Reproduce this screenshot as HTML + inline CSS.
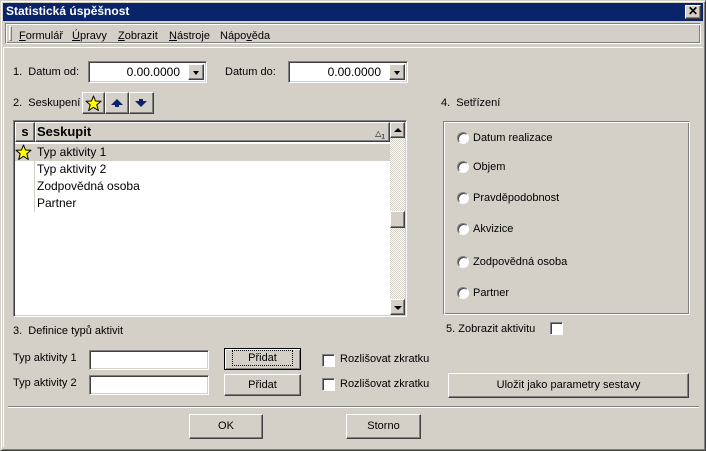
<!DOCTYPE html>
<html><head><meta charset="utf-8"><style>
*{box-sizing:border-box;margin:0;padding:0}
body{width:706px;height:451px;overflow:hidden;background:#d4d0c8;font-family:"Liberation Sans",Arial,sans-serif;font-size:11px;color:#000;position:relative}
.a{position:absolute}
.t{position:absolute;white-space:nowrap;line-height:13px}
.sunk{position:absolute;background:#fff;border:1px solid;border-color:#808080 #fff #fff #808080;box-shadow:inset 1px 1px 0 #404040,inset -1px -1px 0 #d4d0c8}
.btn{position:absolute;background:#d4d0c8;border:1px solid;border-color:#fff #404040 #404040 #fff;box-shadow:inset -1px -1px 0 #808080;text-align:center}
.dd{position:absolute;right:2px;top:2px;width:16px;bottom:2px;background:#d4d0c8;border:1px solid;border-color:#fff #404040 #404040 #fff;box-shadow:inset -1px -1px 0 #808080}
.dd:after{content:"";position:absolute;left:4px;top:6px;border:3px solid transparent;border-top:4px solid #000;border-bottom:0}
.cb{position:absolute;width:13px;height:13px;background:#fff;border:1px solid;border-color:#808080 #fff #fff #808080;box-shadow:inset 1px 1px 0 #404040}
.rb{position:absolute;width:12px;height:12px;border-radius:50%;background:#fff;border:1px solid;border-color:#808080 #fff #fff #808080;box-shadow:inset 1px 1px 0 #404040}
.u{text-decoration:underline}
</style></head><body>
<div class="a" style="left:0;top:0;width:706px;height:451px;border:1px solid;border-color:#d4d0c8 #404040 #404040 #d4d0c8;box-shadow:inset 1px 1px 0 #fff,inset -1px -1px 0 #808080"></div>
<div class="a" style="left:3px;top:3px;width:700px;height:18px;background:#0a246a"></div>
<div class="t" style="left:6px;top:5px;color:#fff;font-weight:bold;font-size:12px">Statistická úspěšnost</div>
<div class="btn" style="left:685px;top:5px;width:16px;height:14px;font-weight:bold;font-size:12px;line-height:11px">✕</div>
<div class="a" style="left:5px;top:23px;width:696px;height:21px;border:1px solid;border-color:#808080 #fff #fff #808080;box-shadow:inset 1px 1px 0 #fff,inset -1px -1px 0 #808080"></div>
<div class="a" style="left:9px;top:26px;width:3px;height:15px;border:1px solid;border-color:#fff #808080 #808080 #fff"></div>
<div class="t" style="left:19px;top:30px"><span class="u">F</span>ormulář</div>
<div class="t" style="left:72px;top:30px"><span class="u">Ú</span>pravy</div>
<div class="t" style="left:118px;top:30px"><span class="u">Z</span>obrazit</div>
<div class="t" style="left:169px;top:30px"><span class="u">N</span>ástroje</div>
<div class="t" style="left:220px;top:30px">Nápo<span class="u">v</span>ěda</div>
<div class="a" style="left:3px;top:47px;width:700px;height:400px;border-left:1px solid #fff;border-top:1px solid #fff"></div>
<div class="t" style="left:13px;top:66px">1.&nbsp; Datum od:</div>
<div class="sunk" style="left:88px;top:61px;width:119px;height:22px"><div class="t" style="right:26px;top:4px;font-size:12px">0.00.0000</div><div class="dd"></div></div>
<div class="t" style="left:225px;top:66px">Datum do:</div>
<div class="sunk" style="left:288px;top:61px;width:120px;height:22px"><div class="t" style="right:26px;top:4px;font-size:12px">0.00.0000</div><div class="dd"></div></div>
<div class="t" style="left:13px;top:97px">2.&nbsp; Seskupení</div>
<div class="btn" style="left:82px;top:92px;width:23px;height:22px"><svg class="a" style="left:2px;top:2px" width="17" height="17" viewBox="0 0 17 17"><path d="M8.5 1 L10.5 6 L16 6.3 L11.8 9.8 L13.3 15.5 L8.5 12.3 L3.7 15.5 L5.2 9.8 L1 6.3 L6.5 6 Z" fill="#ffff00" stroke="#000" stroke-width="1" stroke-linejoin="round"/></svg></div>
<div class="btn" style="left:105px;top:92px;width:24px;height:22px"><div class="a" style="left:5px;top:6px;border:6px solid transparent;border-bottom:6px solid #0a246a;border-top:0"></div><div class="a" style="left:9px;top:12px;width:4px;height:2px;background:#0a246a"></div></div>
<div class="btn" style="left:129px;top:92px;width:25px;height:22px"><div class="a" style="left:9px;top:6px;width:4px;height:2px;background:#0a246a"></div><div class="a" style="left:5px;top:8px;border:6px solid transparent;border-top:6px solid #0a246a;border-bottom:0"></div></div>
<div class="sunk" style="left:13px;top:120px;width:394px;height:197px;background:#fff"></div>
<div class="btn" style="left:15px;top:122px;width:20px;height:20px;font-weight:bold;font-size:13px;line-height:17px">s</div>
<div class="btn" style="left:35px;top:122px;width:355px;height:20px;text-align:left;font-weight:bold;font-size:13px;line-height:17px;padding-left:1px">Seskupit<span class="a" style="right:4px;top:2px;font-size:8px;font-weight:normal">△<sub>1</sub></span></div>
<div class="a" style="left:15px;top:144px;width:375px;height:17px;background:#d4d0c8"></div>
<div class="a" style="left:34px;top:144px;width:1px;height:68px;background:#d4d0c8"></div>
<svg class="a" style="left:15px;top:144px" width="17" height="17" viewBox="0 0 17 17"><path d="M8.5 1 L10.5 6 L16 6.3 L11.8 9.8 L13.3 15.5 L8.5 12.3 L3.7 15.5 L5.2 9.8 L1 6.3 L6.5 6 Z" fill="#ffff00" stroke="#000" stroke-width="1" stroke-linejoin="round"/></svg>
<div class="t" style="left:37px;top:146px;font-size:12px">Typ aktivity 1</div>
<div class="t" style="left:37px;top:163px;font-size:12px">Typ aktivity 2</div>
<div class="t" style="left:37px;top:180px;font-size:12px">Zodpovědná osoba</div>
<div class="t" style="left:37px;top:197px;font-size:12px">Partner</div>
<div class="a" style="left:390px;top:122px;width:15px;height:193px;background:repeating-conic-gradient(#fff 0 25%,#d4d0c8 0 50%) 0 0/2px 2px"></div>
<div class="btn" style="left:390px;top:122px;width:15px;height:16px"><div class="a" style="left:3px;top:5px;border:4px solid transparent;border-bottom:4px solid #000;border-top:0"></div></div>
<div class="btn" style="left:390px;top:211px;width:15px;height:17px"></div>
<div class="btn" style="left:390px;top:299px;width:15px;height:16px"><div class="a" style="left:3px;top:6px;border:4px solid transparent;border-top:4px solid #000;border-bottom:0"></div></div>
<div class="t" style="left:441px;top:97px">4.&nbsp; Setřízení</div>
<div class="a" style="left:443px;top:121px;width:247px;height:194px;border:1px solid;border-color:#808080 #fff #fff #808080;box-shadow:inset 1px 1px 0 #fff,inset -1px -1px 0 #808080"></div>
<div class="rb" style="left:457px;top:132px"></div><div class="t" style="left:473px;top:132px">Datum realizace</div>
<div class="rb" style="left:457px;top:161px"></div><div class="t" style="left:473px;top:161px">Objem</div>
<div class="rb" style="left:457px;top:192px"></div><div class="t" style="left:473px;top:192px">Pravděpodobnost</div>
<div class="rb" style="left:457px;top:223px"></div><div class="t" style="left:473px;top:223px">Akvizice</div>
<div class="rb" style="left:457px;top:256px"></div><div class="t" style="left:473px;top:256px">Zodpovědná osoba</div>
<div class="rb" style="left:457px;top:287px"></div><div class="t" style="left:473px;top:287px">Partner</div>
<div class="t" style="left:446px;top:323px">5. Zobrazit aktivitu</div>
<div class="cb" style="left:550px;top:322px"></div>
<div class="t" style="left:13px;top:325px">3.&nbsp; Definice typů aktivit</div>
<div class="t" style="left:13px;top:352px">Typ aktivity 1</div>
<div class="sunk" style="left:89px;top:350px;width:120px;height:20px"></div>
<div class="btn" style="left:224px;top:348px;width:77px;height:22px;border:1px solid #000;box-shadow:inset 1px 1px 0 #fff,inset -1px -1px 0 #808080;line-height:18px"><span style="outline:1px dotted #000;outline-offset:1px;padding:0 14px">Přidat</span></div>
<div class="cb" style="left:322px;top:354px"></div><div class="t" style="left:340px;top:353px">Rozlišovat zkratku</div>
<div class="t" style="left:13px;top:377px">Typ aktivity 2</div>
<div class="sunk" style="left:89px;top:375px;width:120px;height:20px"></div>
<div class="btn" style="left:224px;top:374px;width:77px;height:22px;line-height:20px">Přidat</div>
<div class="cb" style="left:322px;top:378px"></div><div class="t" style="left:340px;top:378px">Rozlišovat zkratku</div>
<div class="btn" style="left:448px;top:373px;width:241px;height:25px;line-height:22px">Uložit jako parametry sestavy</div>
<div class="a" style="left:8px;top:406px;width:691px;height:2px;border-top:1px solid #808080;border-bottom:1px solid #fff"></div>
<div class="btn" style="left:189px;top:414px;width:74px;height:25px;line-height:23px">OK</div>
<div class="btn" style="left:346px;top:414px;width:75px;height:25px;line-height:23px">Storno</div>
</body></html>
